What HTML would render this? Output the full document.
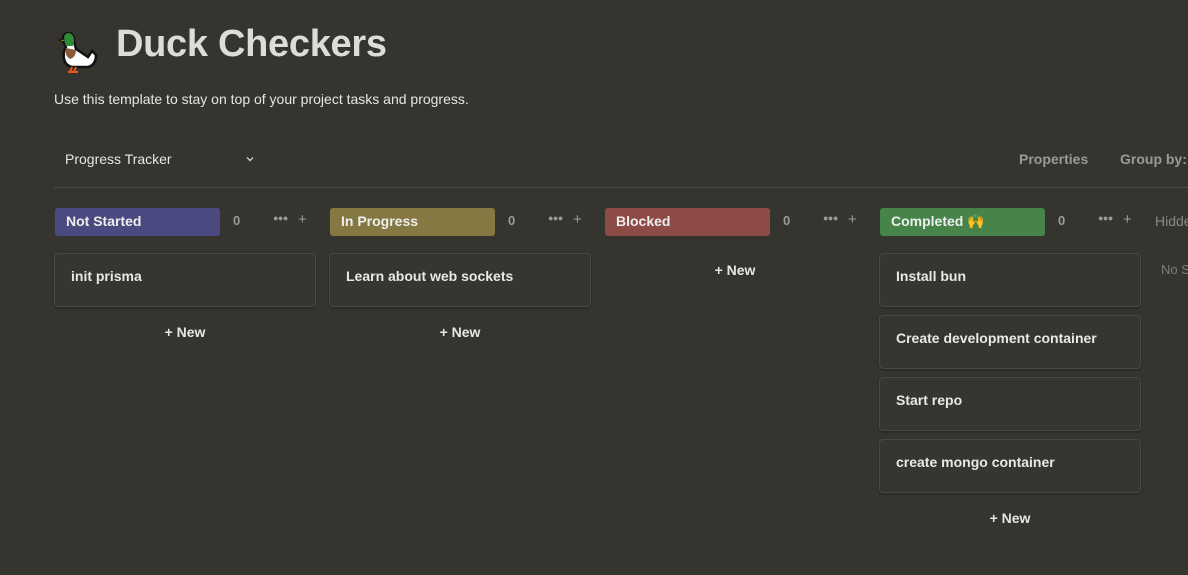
<!DOCTYPE html>
<html><head><style>
*{margin:0;padding:0;box-sizing:border-box}
body{width:1188px;height:575px;background:#36342f;font-family:"Liberation Sans",sans-serif;color:#e6e6e4;position:relative;overflow:hidden}
.a{position:absolute;white-space:nowrap}
h1{position:absolute;left:116px;top:23px;font-size:38px;font-weight:bold;color:#dcdcda;letter-spacing:-0.3px}
.hdr{position:absolute;top:208px;width:165px;height:28px;border-radius:3px;font-size:14px;font-weight:bold;color:#eee;padding:5px 11px}
.cnt{position:absolute;top:213px;font-size:13px;font-weight:bold;color:#9b9a97}
.dots{position:absolute;top:213px;font-size:9px;color:#9b9a97;letter-spacing:-0.5px}
.plus{position:absolute;top:211px;font-size:15px;color:#9b9a97}
.card{position:absolute;width:262px;height:54px;border:1px solid #4a4843;border-radius:4px;background:#37352f;box-shadow:0 1px 2px rgba(0,0,0,.3);font-size:14px;font-weight:bold;padding:14px 16px;color:#e8e8e6}
.new{position:absolute;width:262px;text-align:center;font-size:14px;font-weight:bold;color:#e6e6e4}
</style></head><body>
<svg class="a" style="left:58px;top:29px" width="40" height="44" viewBox="0 0 40 44">
<path d="M6 22 Q4 36 14 38 L30 38 Q38 36 38 26 L34 22 L30 28 Q24 24 18 20 L16 12 Q16 4 10 4 Q4 5 5 12 L8 18 Z" fill="#fff" stroke="#111" stroke-width="2.5"/>
<path d="M6 10 Q6 4 11 4 Q16 5 16 12 L15 17 L8 17 Z" fill="#2e8b3a"/>
<path d="M1 11 L6 10 L6 13 Z" fill="#f5a623" stroke="#111" stroke-width="1"/>
<path d="M8 19 Q6 26 12 30 Q18 28 18 21 Z" fill="#8b5a3c"/>
<path d="M14 38 L12 43 M18 38 L16 43 M10 43 L20 43" stroke="#e8581a" stroke-width="2"/>
</svg>
<h1>Duck Checkers</h1>
<div class="a" style="left:54px;top:91px;font-size:14px;color:#e6e6e4">Use this template to stay on top of your project tasks and progress.</div>
<div class="a" style="left:65px;top:151px;font-size:14px;color:#e6e6e4">Progress Tracker</div>
<svg class="a" style="left:245px;top:154px" width="10" height="10" viewBox="0 0 10 10"><path d="M2 3.5 L5 6.5 L8 3.5" stroke="#ccc" stroke-width="1.4" fill="none"/></svg>
<div class="a" style="left:1019px;top:151px;font-size:14px;font-weight:bold;color:#9b9a97">Properties</div>
<div class="a" style="left:1120px;top:151px;font-size:14px;font-weight:bold;color:#9b9a97">Group by:</div>
<div class="a" style="left:54px;top:187px;width:1134px;height:1px;background:#4e4c47"></div>

<div class="hdr" style="left:55px;background:#4a4a80">Not Started</div>
<div class="cnt" style="left:233px">0</div><div class="dots" style="left:273px">●●●</div><div class="plus" style="left:298px">+</div>
<div class="hdr" style="left:330px;background:#857843">In Progress</div>
<div class="cnt" style="left:508px">0</div><div class="dots" style="left:548px">●●●</div><div class="plus" style="left:573px">+</div>
<div class="hdr" style="left:605px;background:#8c4b46">Blocked</div>
<div class="cnt" style="left:783px">0</div><div class="dots" style="left:823px">●●●</div><div class="plus" style="left:848px">+</div>
<div class="hdr" style="left:880px;background:#46844a">Completed 🙌</div>
<div class="cnt" style="left:1058px">0</div><div class="dots" style="left:1098px">●●●</div><div class="plus" style="left:1123px">+</div>
<div class="a" style="left:1155px;top:213px;font-size:14px;color:#8a8985">Hidden</div>
<div class="a" style="left:1161px;top:262px;font-size:13px;color:#7d7c78">No S</div>

<div class="card" style="left:54px;top:253px">init prisma</div>
<div class="new" style="left:54px;top:324px">+ New</div>
<div class="card" style="left:329px;top:253px">Learn about web sockets</div>
<div class="new" style="left:329px;top:324px">+ New</div>
<div class="new" style="left:604px;top:262px">+ New</div>
<div class="card" style="left:879px;top:253px">Install bun</div>
<div class="card" style="left:879px;top:315px">Create development container</div>
<div class="card" style="left:879px;top:377px">Start repo</div>
<div class="card" style="left:879px;top:439px">create mongo container</div>
<div class="new" style="left:879px;top:510px">+ New</div>
</body></html>
